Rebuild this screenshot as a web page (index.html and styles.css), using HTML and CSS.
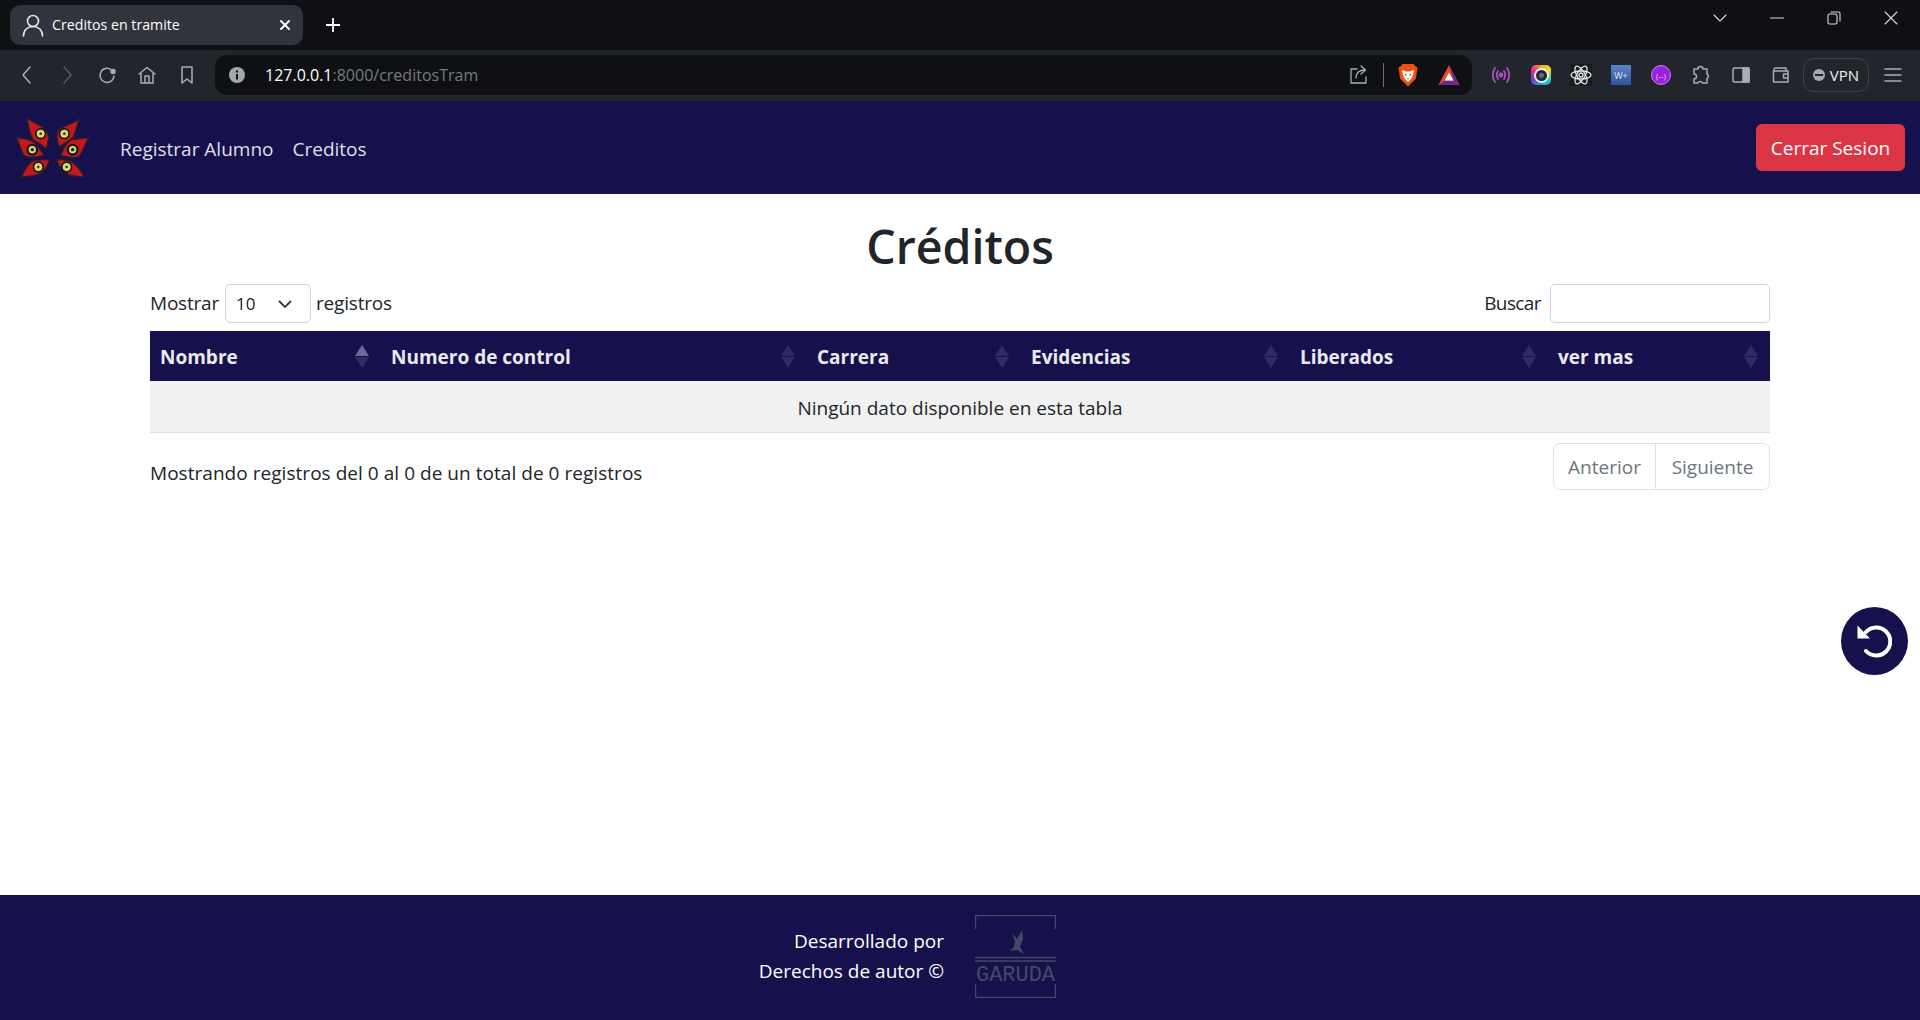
FILE: index.html
```html
<!DOCTYPE html>
<html lang="es">

<head>
    <meta charset="UTF-8">
    <title>Creditos en tramite</title>
    <link rel="stylesheet" href="styles.css">
</head>

<body>
    <!-- Barra del navegador -->
    <div class="titlebar">
        <div class="tab">
            <svg class="tab-user" viewBox="0 0 24 24" width="24" height="24"><circle cx="12" cy="8" r="5.500"/><path d="M2.500 23c0-6 4-9.500 9.500-9.500s9.500 3.500 9.500 9.500"/></svg>
            <span class="tab-title">Creditos en tramite</span>
            <svg class="tab-close" viewBox="0 0 12 12" width="12" height="12"><path d="M2 2l8 8M10 2l-8 8"/></svg>
        </div>
        <svg class="tab-new" viewBox="0 0 14 14" width="14" height="14"><path d="M7 0v14M0 7h14"/></svg>
        <div class="window-btns">
            <span class="window-btn"><svg viewBox="0 0 14 8" width="14" height="8"><path d="M1 1l6 6 6-6"/></svg></span>
            <span class="window-btn"><svg viewBox="0 0 14 2" width="14" height="2"><path d="M0 1h14"/></svg></span>
            <span class="window-btn"><svg viewBox="0 0 14 14" width="14" height="14"><rect x="1" y="3" width="9" height="10" rx="1.500"/><path d="M4 1h7.500a1.500 1.500 0 0 1 1.500 1.500V10"/></svg></span>
            <span class="window-btn"><svg viewBox="0 0 14 14" width="14" height="14"><path d="M1 1l12 12M13 1L1 13"/></svg></span>
        </div>
    </div>

    <div class="toolbar">
        <span class="tool"><svg viewBox="0 0 20 20" width="20" height="20"><path d="M13 2l-7 8 7 8"/></svg></span>
        <span class="tool dim"><svg viewBox="0 0 20 20" width="20" height="20"><path d="M7 2l7 8-7 8"/></svg></span>
        <span class="tool"><svg viewBox="0 0 20 20" width="20" height="20"><path d="M15.500 6A7 7 0 1 0 17 11"/><circle class="fill" cx="16" cy="6.500" r="2"/></svg></span>
        <span class="tool"><svg viewBox="0 0 20 20" width="20" height="20"><path d="M2 9l8-6.500L18 9M4 8v10h12V8M8 18v-7h4v7"/></svg></span>
        <span class="tool"><svg viewBox="0 0 20 20" width="20" height="20"><path d="M5 2h10v16l-5-4-5 4z"/></svg></span>
        <div class="address">
            <svg class="info" viewBox="0 0 18 18" width="18" height="18"><circle cx="9" cy="9" r="8"/><path d="M8 8h2v5.500H8zM8 4.500h2v2H8z"/></svg>
            <span class="url"><span class="url-host">127.0.0.1</span>:8000/creditosTram</span>
            <span class="address-right">
                <svg class="share" viewBox="0 0 20 20" width="20" height="20"><path d="M8 4H2v14h15v-6M7 13c0-5 3-8 9-8M12 1l4.500 4-4.500 4"/></svg>
                <span class="sep"></span>
                <svg viewBox="0 0 20 24" width="20" height="24"><path fill="#f1500f" d="M4.500 1h11l2 2.500 2 1-1.500 11-8 8-8-8-1.500-11 2-1z"/><path fill="#fff" d="M4 7l4 1.500h4L16 7l-1 5-1.500 3.500L10 19l-3.500-3.500L5 12z"/><path fill="#f1500f" d="M6.500 10.500l2.500 1-1.500 1.500zM13.500 10.500l-2.500 1 1.500 1.500zM8.500 15h3L10 16.500z"/></svg>
                <svg class="bat" viewBox="0 0 22 22" width="22" height="22"><path fill="#f0452d" d="M11 1l10.500 20H.5z"/><path fill="#662d91" d="M.5 21l6-4.500h9l6 4.500z"/><path fill="#662d91" d="M11 1l10.500 20-6-4.500z"/><path fill="#fff" d="M11 8.500l4.500 8h-9z"/></svg>
            </span>
        </div>
        <div class="extensions">
            <span class="tool"><svg class="ext-radio" viewBox="0 0 20 20" width="20" height="20"><path d="M4 3c-3 4-3 10 0 14M16 3c3 4 3 10 0 14M7 6c-1.500 2.500-1.500 5.500 0 8M13 6c1.500 2.500 1.500 5.500 0 8"/><circle cx="10" cy="10" r="1.500"/></svg></span>
            <span class="tool"><span class="ext-camera"><span class="ext-lens"></span></span></span>
            <span class="tool"><svg class="ext-atom" viewBox="0 0 22 22" width="22" height="22"><rect class="atom-bg" width="22" height="22"/><ellipse cx="11" cy="11" rx="10" ry="4"/><ellipse cx="11" cy="11" rx="10" ry="4" transform="rotate(60 11 11)"/><ellipse cx="11" cy="11" rx="10" ry="4" transform="rotate(120 11 11)"/><circle cx="11" cy="11" r="2"/></svg></span>
            <span class="tool"><span class="ext-word">W+</span></span>
            <span class="tool"><span class="ext-purple">(--)</span></span>
            <span class="tool"><svg viewBox="0 0 20 20" width="20" height="20"><path d="M7 4a2.500 2.500 0 0 1 5 0h4v5a2.500 2.500 0 0 1 0 4.500V18h-4.500a2.500 2.500 0 0 0-4.500 0H3v-4a2.500 2.500 0 0 0 0-5V4z"/></svg></span>
            <span class="tool"><svg viewBox="0 0 20 20" width="20" height="20"><rect x="2" y="3" width="16" height="14" rx="1.500"/><rect class="fill" x="12" y="3" width="6" height="14"/></svg></span>
            <span class="tool"><svg viewBox="0 0 20 20" width="20" height="20"><path d="M3 6V4.500A1.500 1.500 0 0 1 4.500 3H15v3M2.500 6H17v11H2.500zM17 9h-4.500v4H17"/></svg></span>
        </div>
        <div class="vpn"><span class="vpn-dot"></span>VPN</div>
        <span class="tool menu"><svg viewBox="0 0 20 20" width="20" height="20"><path d="M2 4h16M2 10h16M2 16h16"/></svg></span>
    </div>

    <!-- Navbar -->
    <nav class="navbar">
        <svg class="logo" viewBox="48 53 222 180" width="74" height="60">
            <g class="petals">
                <path d="M82 55L110 70Q140 85 147 110L138 147Q125 130 100 120Q85 90 82 55z"/>
                <path d="M238 55C225 70 190 75 175 90C168 105 172 125 178 140C195 125 218 118 222 105C230 85 232 70 238 55z"/>
                <path d="M50 112C80 115 100 120 112 135L132 165C110 170 85 175 72 165C62 150 58 128 50 112z"/>
                <path d="M268 112L215 118C200 125 190 145 182 165C205 172 235 175 240 165C250 150 255 125 268 112z"/>
                <path d="M65 230C75 205 85 190 100 182C120 178 135 178 150 178C142 195 135 215 115 222C95 228 80 228 65 230z"/>
                <path d="M252 230C240 205 225 190 210 182C195 178 180 178 170 178C175 195 190 215 205 222C220 228 235 228 252 230z"/>
            </g>
            <g class="eyes-out">
                <circle cx="122" cy="100" r="17"/><circle cx="193" cy="100" r="17"/>
                <circle cx="97" cy="148" r="18"/><circle cx="218" cy="148" r="18"/>
                <circle cx="115" cy="200" r="17"/><circle cx="200" cy="200" r="17"/>
            </g>
            <g class="eyes">
                <circle cx="122" cy="100" r="11"/><circle cx="193" cy="100" r="11"/>
                <circle cx="97" cy="148" r="10"/><circle cx="218" cy="148" r="10"/>
                <circle cx="115" cy="200" r="11"/><circle cx="200" cy="200" r="11"/>
            </g>
            <g class="pupils">
                <circle cx="122" cy="100" r="3.500"/><circle cx="193" cy="100" r="3.500"/>
                <circle cx="97" cy="148" r="5"/><circle cx="218" cy="148" r="5"/>
                <circle cx="115" cy="200" r="3.500"/><circle cx="200" cy="200" r="3.500"/>
            </g>
        </svg>
        <ul class="nav-links">
            <li><a href="#">Registrar Alumno</a></li>
            <li><a href="#">Creditos</a></li>
        </ul>
        <a class="btn-logout" href="#">Cerrar Sesion</a>
    </nav>

    <main class="container">
        <h1 class="title">Créditos</h1>

        <div class="table-top">
            <label class="length"><span class="tight">Mostrar</span>
                <span class="select">10
                    <svg viewBox="0 0 14 8" width="14" height="8"><path d="M1 1l6 6 6-6"/></svg>
                </span>
                <span class="tight">registros</span></label>
            <label class="search"><span class="tight">Buscar</span> <span class="search-input"></span></label>
        </div>

        <table class="table">
            <thead>
                <tr>
                    <th class="col-nombre"><div class="th-inner">Nombre<span class="sort sort-asc"></span></div></th>
                    <th class="col-control"><div class="th-inner">Numero de control<span class="sort"></span></div></th>
                    <th class="col-carrera"><div class="th-inner">Carrera<span class="sort"></span></div></th>
                    <th class="col-evidencias"><div class="th-inner">Evidencias<span class="sort"></span></div></th>
                    <th class="col-liberados"><div class="th-inner">Liberados<span class="sort"></span></div></th>
                    <th class="col-mas"><div class="th-inner">ver mas<span class="sort"></span></div></th>
                </tr>
            </thead>
            <tbody>
                <tr>
                    <td colspan="6">Ningún dato disponible en esta tabla</td>
                </tr>
            </tbody>
        </table>

        <div class="table-bottom">
            <div class="table-info">Mostrando registros del 0 al 0 de un total de 0 registros</div>
            <div class="pagination">
                <a href="#">Anterior</a>
                <a href="#">Siguiente</a>
            </div>
        </div>
    </main>

    <a class="float-btn" href="#">
        <svg viewBox="0 0 36 36" width="36" height="36"><path class="arc" d="M10 10A14 14 0 1 1 10 29"/><path class="head" d="M1.500 3.500v13H14z"/></svg>
    </a>

    <footer class="footer">
        <div class="footer-text">
            <div>Desarrollado por</div>
            <div>Derechos de autor ©</div>
        </div>
        <svg class="garuda" viewBox="0 0 81 83" width="81" height="83">
            <path class="garuda-line" d="M.5 14V.5h80V14M.5 69v13.500h80V69M0 42.500h81M0 46h81"/>
            <path class="garuda-bird" d="M37 18l5 6 5-9 1 9-3 8 4 7-7-4-7 1 4-4 1-6z"/>
            <text class="garuda-name" x="1" y="66" textLength="79" lengthAdjust="spacingAndGlyphs">GARUDA</text>
        </svg>
    </footer>
</body>

</html>
```

FILE: styles.css
```css
* {
    padding: 0px;
    margin: 0px;
    box-sizing: border-box;
}

html,
body {
    height: 100%;
}

body {
    display: flex;
    flex-direction: column;
    overflow: hidden;
    font-family: "Open Sans", "Noto Sans", sans-serif;
    font-size: 19px;
    color: #212529;
    background: #fff;
}

a {
    text-decoration: none;
}

/* barra del navegador */
.titlebar {
    flex: none;
    height: 50px;
    display: flex;
    align-items: flex-start;
    padding: 5px 1px 0 10px;
    background: #0e1014;
}

.titlebar svg,
.toolbar svg {
    fill: none;
    stroke-linecap: round;
    stroke-linejoin: round;
}

.tab {
    width: 293px;
    height: 40px;
    display: flex;
    align-items: center;
    padding: 0 12px 0 11px;
    border-radius: 10px;
    background: #31343c;
    color: #fff;
    font-size: 14.2px;
}

.tab-user {
    stroke: #e4e6ea;
    stroke-width: 1.6;
}

.tab-title {
    flex: 1;
    margin-left: 7px;
    padding-bottom: 1px;
}

.tab-close {
    stroke: #fff;
    stroke-width: 2;
}

.tab-new {
    margin: 13px 0 0 23px;
    stroke: #fff;
    stroke-width: 1.8;
}

.window-btns {
    display: flex;
    margin-left: auto;
    height: 30px;
}

.window-btn {
    width: 57px;
    height: 26px;
    display: flex;
    align-items: center;
    justify-content: center;
}

.window-btn svg {
    stroke: #d7d9dd;
    stroke-width: 1.1;
}

.toolbar {
    flex: none;
    height: 51px;
    display: flex;
    align-items: center;
    padding: 0 0 1px 7px;
    background: #22252b;
}

.tool {
    flex: none;
    width: 40px;
    height: 40px;
    display: flex;
    align-items: center;
    justify-content: center;
}

.tool svg {
    stroke: #a9adb6;
    stroke-width: 1.5;
}

.tool svg .fill {
    fill: #a9adb6;
}

.tool.dim svg {
    stroke: #565a63;
}

.address {
    flex: none;
    width: 1257px;
    height: 40px;
    margin: 0 9px 0 8px;
    display: flex;
    align-items: center;
    padding: 0 12px 0 13px;
    border-radius: 12px;
    background: #0e1014;
}

.info {
    fill: #a4a7ae !important;
}

.info path {
    fill: #0e1014;
}

.url {
    margin-left: 19px;
    font-size: 16px;
    color: #777a82;
}

.url-host {
    color: #fff;
}

.address-right {
    margin-left: auto;
    display: flex;
    align-items: center;
}

.share {
    stroke: #a9adb6;
    stroke-width: 1.3;
}

.sep {
    width: 1px;
    height: 24px;
    margin: 0 14px;
    background: #6b6e75;
}

.bat {
    margin-left: 20px;
}

.extensions {
    display: flex;
}

.ext-radio {
    stroke: #a94fc0 !important;
    stroke-width: 1.8 !important;
}

.ext-radio circle {
    fill: #a94fc0;
}

.ext-camera {
    width: 20px;
    height: 20px;
    display: flex;
    align-items: center;
    justify-content: center;
    border-radius: 5px;
    background: conic-gradient(#f5a623, #f7e11e, #1bd6a8, #1aa0e8, #7a3fd6, #e8288a, #f5a623);
}

.ext-lens {
    width: 15px;
    height: 15px;
    border: 2px solid #e9edf2;
    border-radius: 50%;
    background: radial-gradient(#5b6d80 0 2px, #1f2a36 3px);
}

.ext-atom {
    stroke: #e4e6ea !important;
    stroke-width: 1.3 !important;
}

.atom-bg {
    fill: #1a1b1f;
    stroke: none;
}

.ext-word {
    width: 20px;
    height: 20px;
    display: flex;
    align-items: center;
    justify-content: center;
    background: linear-gradient(#5a83c9, #2c55a0);
    color: #dfe7f5;
    font-size: 9px;
}

.ext-purple {
    width: 20px;
    height: 20px;
    display: flex;
    align-items: center;
    justify-content: center;
    border-radius: 50%;
    border: 1px solid #c48ae0;
    background: #9a1fe0;
    color: #f0dcfb;
    font-size: 8px;
}

.vpn {
    flex: none;
    width: 66px;
    height: 34px;
    margin-left: 2px;
    display: flex;
    align-items: center;
    justify-content: center;
    gap: 5px;
    border: 1px solid #3d4048;
    border-radius: 11px;
    color: #f0f1f3;
    font-size: 15px;
}

.vpn-dot {
    width: 12px;
    height: 12px;
    display: flex;
    align-items: center;
    justify-content: center;
    border-radius: 50%;
    background: #a4a7b5;
}

.vpn-dot::after {
    content: "";
    width: 8px;
    height: 2.500px;
    background: #22252b;
}

.menu {
    margin-left: 4px;
}

/* navbar */
.navbar {
    flex: none;
    height: 93px;
    display: flex;
    align-items: center;
    padding: 0 15px 0 16px;
    background: #16114d;
}

.petals path {
    fill: #c8161d;
    stroke: #2a2226;
    stroke-width: 4;
}

.eyes-out circle {
    fill: #17171a;
}

.eyes circle {
    fill: #dcd64f;
    stroke: #e8e8dc;
    stroke-width: 2;
}

.pupils circle {
    fill: #1d1d10;
}

.nav-links {
    display: flex;
    gap: 19px;
    margin-left: 30px;
    padding-top: 2px;
    list-style: none;
}

.nav-links a {
    color: rgba(255, 255, 255, .88);
}

.btn-logout {
    margin-left: auto;
    width: 149px;
    height: 47px;
    display: flex;
    align-items: center;
    justify-content: center;
    padding-top: 1px;
    border-radius: 6px;
    background: #dc3545;
    color: #fff;
}

/* contenido */
.container {
    flex: 1;
    width: 1620px;
    margin: 0 auto;
}

.title {
    height: 90px;
    padding-top: 16px;
    text-align: center;
    font-size: 46.500px;
    font-weight: 600;
    line-height: 72px;
}

.table-top {
    height: 47px;
    display: flex;
    justify-content: space-between;
    align-items: flex-start;
}

.length,
.search {
    display: flex;
    align-items: center;
    height: 39px;
}

.tight {
    letter-spacing: -0.2px;
    padding-bottom: 1px;
}

.search .tight {
    letter-spacing: -0.6px;
}

.select {
    width: 86px;
    height: 39px;
    margin: 0 5px 0 6px;
    display: flex;
    align-items: center;
    justify-content: space-between;
    padding: 0 18px 0 10px;
    border: 1px solid #ced4da;
    border-radius: 5px;
    font-size: 17px;
}

.select svg {
    fill: none;
    stroke: #343a40;
    stroke-width: 1.8;
}

.search-input {
    width: 220px;
    height: 39px;
    margin-left: 9px;
    border: 1px solid #ced4da;
    border-radius: 5px;
}

.table {
    width: 100%;
    table-layout: fixed;
    border-collapse: separate;
    border-spacing: 0;
}

.table th {
    height: 50px;
    padding: 2px 10px 0;
    background: #16114d;
    color: #e9eaf0;
    font-weight: 700;
    text-align: left;
}

.col-nombre {
    width: 231px;
}

.col-control {
    width: 426px;
}

.col-carrera {
    width: 214px;
}

.col-evidencias {
    width: 269px;
}

.col-liberados {
    width: 258px;
}

.col-mas {
    width: 222px;
}

.th-inner {
    display: flex;
    align-items: center;
    justify-content: space-between;
}

.sort {
    flex: none;
    display: flex;
    flex-direction: column;
    gap: 1px;
    margin: -2px 2px 0 0;
}

.sort::before,
.sort::after {
    content: "";
    width: 0;
    height: 0;
    border-left: 7px solid transparent;
    border-right: 7px solid transparent;
}

.sort::before {
    border-bottom: 11px solid #2f2b66;
}

.sort::after {
    border-top: 11px solid #2f2b66;
}

.sort-asc::before {
    border-bottom-color: #6f6b98;
}

.table td {
    height: 52px;
    padding-top: 3px;
    text-align: center;
    background: #f1f1f1;
    border-bottom: 1px solid #dee2e6;
}

.table-bottom {
    display: flex;
    justify-content: space-between;
    align-items: flex-start;
    padding-top: 10px;
}

.table-info {
    height: 46px;
    padding-top: 17px;
    letter-spacing: 0.04px;
}

.pagination {
    display: flex;
    width: 217px;
    height: 47px;
    border: 1px solid #dee2e6;
    border-radius: 7px;
}

.pagination a {
    flex: 1;
    display: flex;
    align-items: center;
    justify-content: center;
    padding-top: 1px;
    color: #6c757d;
}

.pagination a+a {
    flex: none;
    width: 114px;
    border-left: 1px solid #dee2e6;
}

/* boton flotante */
.float-btn {
    position: fixed;
    left: 1841px;
    top: 607px;
    width: 67px;
    height: 68px;
    display: flex;
    align-items: center;
    justify-content: center;
    border-radius: 50%;
    background: #16114d;
}

.float-btn svg {
    margin: -2px 0 0 -2px;
}

.arc {
    fill: none;
    stroke: #fff;
    stroke-width: 4;
    stroke-linecap: round;
}

.head {
    fill: #fff;
}

/* footer */
.footer {
    flex: none;
    height: 125px;
    display: flex;
    align-items: flex-start;
    justify-content: center;
    padding-top: 20px;
    background: #16114d;
    color: #fff;
}

.footer-text {
    width: 240px;
    margin: 11px 31px 0 0;
    text-align: right;
    line-height: 30px;
}

.garuda {
    margin-right: 160px;
}

.garuda-line {
    fill: none;
    stroke: #404b66;
    stroke-width: 1.5;
}

.garuda-bird {
    fill: #404b66;
}

.garuda-name {
    fill: #404b66;
    font-family: "Liberation Mono", monospace;
    font-size: 22px;
}
```
